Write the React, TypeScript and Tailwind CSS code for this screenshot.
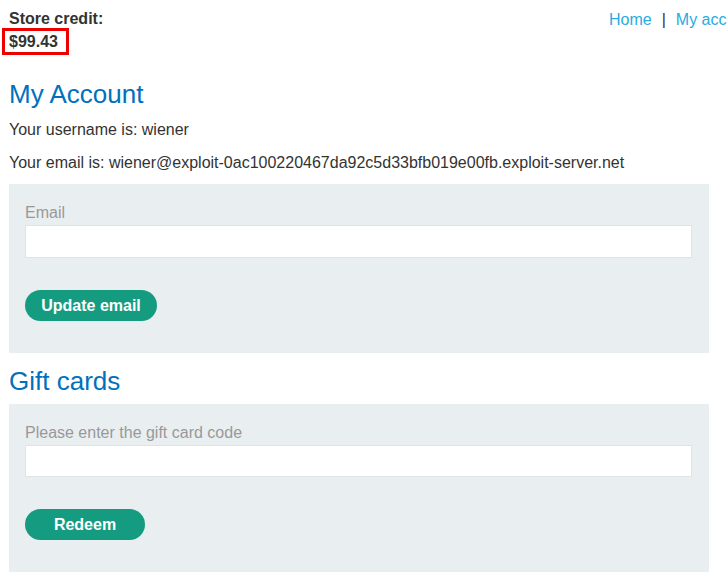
import React from 'react';

export default function App() {
  return (
    <div className="w-[727px] h-[583px] overflow-hidden bg-white text-[#333332] font-['Liberation_Sans',Arial,sans-serif] text-[16px]">
      <div className="pl-[9px] pt-[10px]">
        {/* Top bar */}
        <div className="flex">
          <div className="w-[600px] shrink-0">
            <div className="font-bold leading-[18px]">Store credit:</div>
            <div className="ml-[-7px] w-[67px] h-[27px] border-[3px] border-[#ee0000] pl-[4px] font-bold leading-[21px]">
              $99.43
            </div>
          </div>
          <div className="shrink-0 whitespace-nowrap leading-[18px] pt-[1px]">
            <a className="text-[#29abe0]">Home</a>
            <span className="px-[10px]">|</span>
            <a className="text-[#29abe0]">My account</a>
          </div>
        </div>

        <h1 className="mt-[24px] text-[26px] leading-[30px] text-[#0071bc]">My Account</h1>
        <p className="mt-[11px] leading-[20px]">Your username is: wiener</p>
        <p className="mt-[13px] leading-[20px]">
          Your email is: wiener@exploit-0ac100220467da92c5d33bfb019e00fb.exploit-server.net
        </p>

        <form className="mt-[11px] w-[700px] bg-[#e9eef1] pl-[16px] pr-[17px] pt-[19px] pb-[32px]">
          <label className="block leading-[20px] text-[#999999]">Email</label>
          <input className="mt-[2px] block w-full h-[33px] bg-white border border-[#dfe3e6] outline-none" />
          <button
            type="button"
            className="mt-[32px] block w-[132px] h-[31px] rounded-full bg-[#159c80] text-white font-bold leading-[31px]"
          >
            Update email
          </button>
        </form>

        <h2 className="mt-[13px] text-[26px] leading-[30px] text-[#0071bc]">Gift cards</h2>

        <form className="mt-[8px] w-[700px] bg-[#e9eef1] pl-[16px] pr-[17px] pt-[19px] pb-[32px]">
          <label className="block leading-[20px] text-[#999999]">Please enter the gift card code</label>
          <input className="mt-[2px] block w-full h-[32px] bg-white border border-[#dfe3e6] outline-none" />
          <button
            type="button"
            className="mt-[32px] block w-[120px] h-[31px] rounded-full bg-[#159c80] text-white font-bold leading-[31px]"
          >
            Redeem
          </button>
        </form>
      </div>
    </div>
  );
}
